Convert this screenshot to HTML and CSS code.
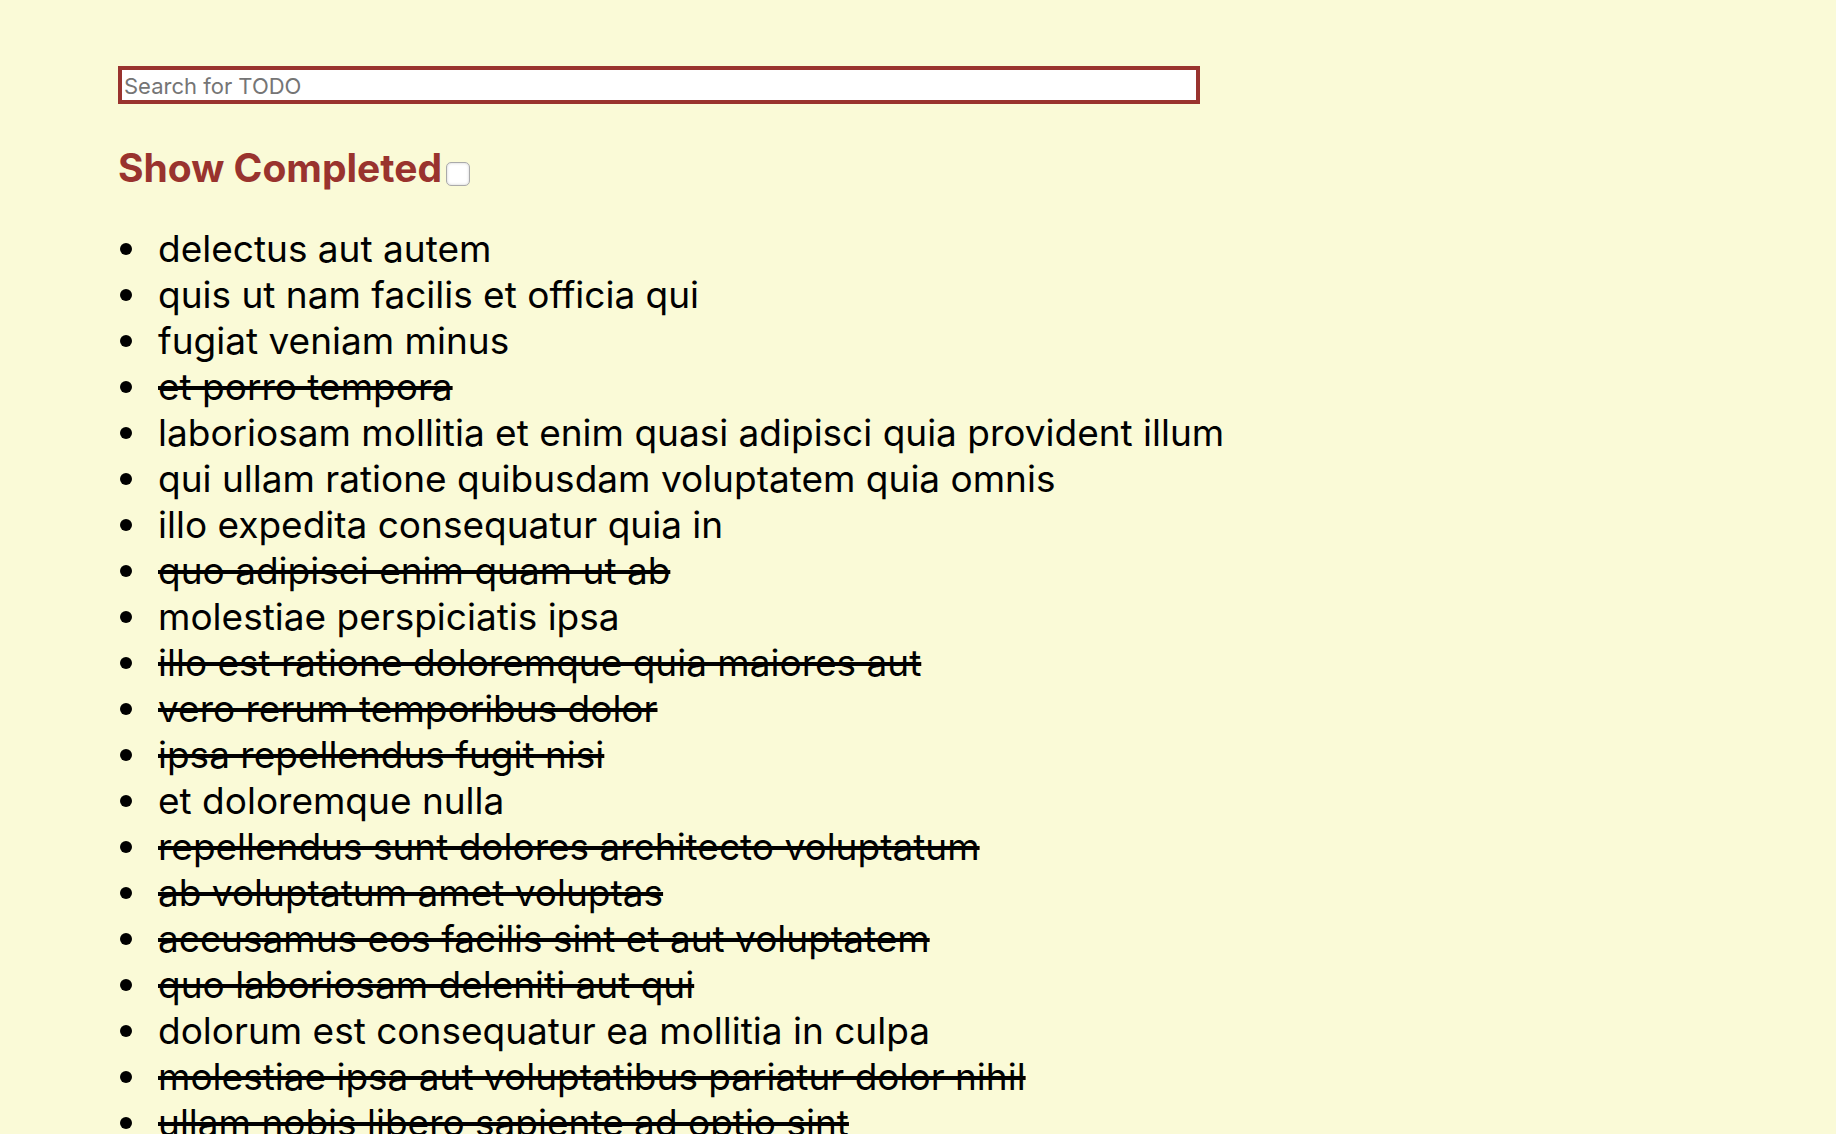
FILE: index.html
```html
<!DOCTYPE html>
<html lang="en">
<head>
<meta charset="utf-8">
<title>TODO</title>
<link rel="stylesheet" href="styles.css">
</head>
<body>
<main class="app">
<input class="search" type="search" placeholder="Search for TODO" aria-label="Search for TODO">
<div class="filter">
<label class="filter-label" for="completed">Show Completed</label>
<input class="filter-box" type="checkbox" id="completed">
</div>
<ul class="todos">
<li><span>delectus aut autem</span></li>
<li><span>quis ut nam facilis et officia qui</span></li>
<li><span>fugiat veniam minus</span></li>
<li><span class="done">et porro tempora</span></li>
<li><span>laboriosam mollitia et enim quasi adipisci quia provident illum</span></li>
<li><span>qui ullam ratione quibusdam voluptatem quia omnis</span></li>
<li><span>illo expedita consequatur quia in</span></li>
<li><span class="done">quo adipisci enim quam ut ab</span></li>
<li><span>molestiae perspiciatis ipsa</span></li>
<li><span class="done">illo est ratione doloremque quia maiores aut</span></li>
<li><span class="done">vero rerum temporibus dolor</span></li>
<li><span class="done">ipsa repellendus fugit nisi</span></li>
<li><span>et doloremque nulla</span></li>
<li><span class="done">repellendus sunt dolores architecto voluptatum</span></li>
<li><span class="done">ab voluptatum amet voluptas</span></li>
<li><span class="done">accusamus eos facilis sint et aut voluptatem</span></li>
<li><span class="done">quo laboriosam deleniti aut qui</span></li>
<li><span>dolorum est consequatur ea mollitia in culpa</span></li>
<li><span class="done">molestiae ipsa aut voluptatibus pariatur dolor nihil</span></li>
<li><span class="done">ullam nobis libero sapiente ad optio sint</span></li>
</ul>
</main>
</body>
</html>
```
FILE: styles.css
```css
* { box-sizing: border-box; }
html { background: #fafad7; }
body {
  margin: 0;
  height: 100vh;
  overflow: hidden;
  font-family: Inter, "Liberation Sans", sans-serif;
  line-height: 46px;
  color: #000;
}
.app { padding: 66px 118px 0; }
.search {
  display: block;
  width: 1082px;
  max-width: 100%;
  height: 38px;
  margin: 0;
  padding: 3px 2px 1px;
  border: 4px solid #99332e;
  border-radius: 0;
  background: #fff;
  font: 22px/26px Inter, "Liberation Sans", sans-serif;
  appearance: none;
  outline: none;
}
.search::placeholder { color: #757575; opacity: 1; }
.filter {
  display: flex;
  align-items: center;
  gap: 4px;
  margin-top: 41px;
}
.filter-label {
  color: #99332e;
  font-size: 39px;
  font-weight: 700;
}
.filter-box {
  appearance: none;
  width: 24px;
  height: 24px;
  margin: 12px 0 0;
  border: 1px solid #aaa;
  border-radius: 5px;
  background: #fff;
  box-shadow: inset 0 0 3px #ccc;
}
.todos {
  margin: 35px 0 0;
  padding: 0 0 0 2px;
  list-style: none;
  font-size: 37px;
}
.todos li {
  display: flex;
  align-items: center;
  gap: 26px;
}
.todos li::before {
  content: "";
  flex: none;
  width: 12px;
  height: 12px;
  border-radius: 50%;
  background: #000;
}
.done { text-decoration: line-through; text-decoration-thickness: 4px; }
```
